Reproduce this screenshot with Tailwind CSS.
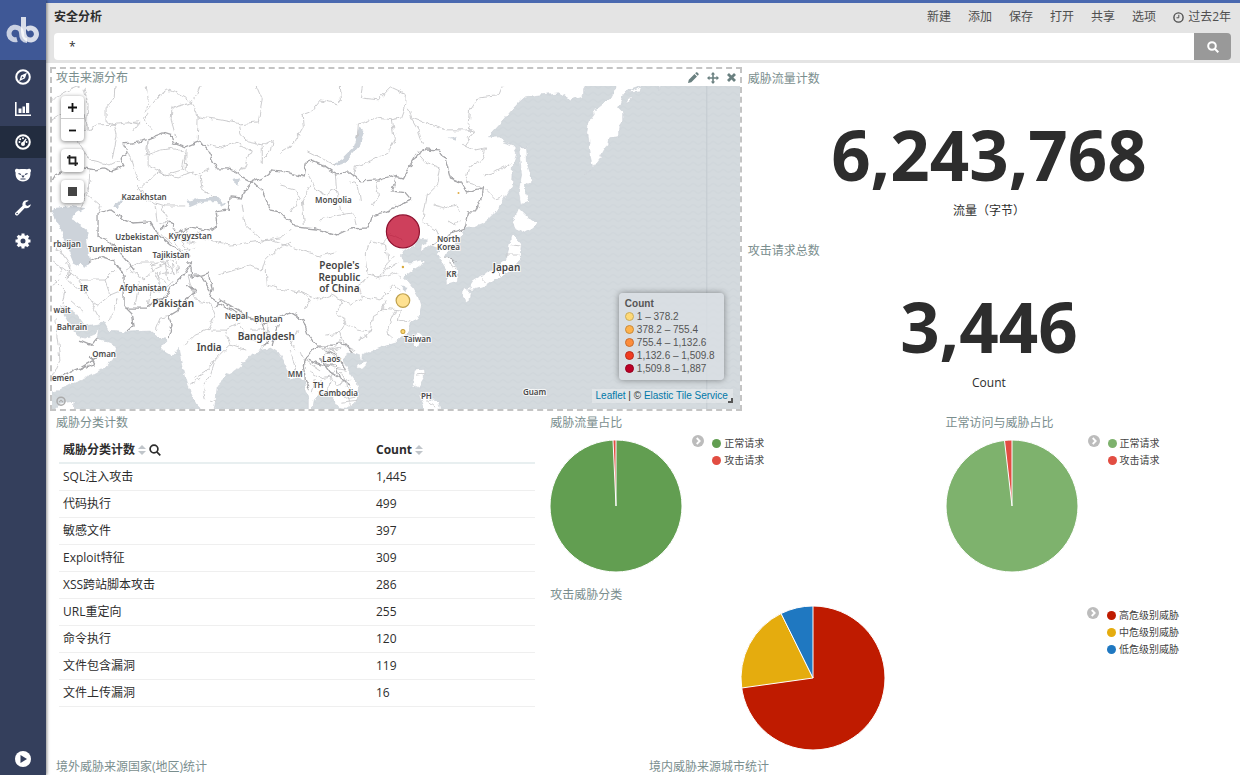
<!DOCTYPE html>
<html lang="zh-CN">

<head>
    <meta charset="UTF-8" />
    <meta name="viewport" content="width=device-width, initial-scale=1.0" />
    <title>安全分析</title>
    <script src="https://cdn.jsdelivr.net/npm/@tailwindcss/browser@4"></script>
</head>

<body class="h-screen overflow-hidden flex bg-white text-[#2d2d2d] text-xs font-['Open_Sans','Noto_Sans_CJK_SC',sans-serif]">

    <!-- Sidebar -->
    <nav class="relative z-10 w-[46px] shrink-0 h-full flex flex-col bg-[#343f5c] text-white shadow-[1px_0_3px_rgba(0,0,0,0.45)]">
        <a href="#" aria-label="首页" class="h-[60px] flex items-center justify-center bg-[#3f5896]">
            <svg class="w-[36px] h-[30px]" viewBox="0 0 36 30" fill="none">
                <path d="M12 24.500A6.300 6.300 0 1 1 16.500 17.500C16.500 22 17 25.500 22 25.500" stroke="#fff" stroke-opacity=".72" stroke-width="5" />
                <path d="M18.500 2v15c0 4.500 3 8 7.500 8a6 6 0 1 0-4.500-10.500" stroke="#fff" stroke-opacity=".8" stroke-width="5" />
            </svg>
        </a>
        <a href="#" aria-label="发现" class="h-[33px] flex items-center justify-center">
            <svg class="w-4 h-4" viewBox="0 0 16 16"><circle cx="8" cy="8" r="6.8" fill="none" stroke="#fff" stroke-width="2" /><path fill="#fff" fill-rule="evenodd" d="M11.900 3.700 10 9.300 4.200 12.300 6 6.600zM7.200 7.300l-.7 2.500 2.400-1.300z" /></svg>
        </a>
        <a href="#" aria-label="可视化" class="h-[33px] flex items-center justify-center">
            <svg class="w-4 h-4" viewBox="0 0 16 16" fill="#fff"><path d="M0 0h1.600v12.400H16V14H0zM3.500 6.500h3v4.500h-3zM7.500 4.500h2.500V11H7.500zM11 1h3.200v10H11z" /></svg>
        </a>
        <a href="#" aria-label="仪表盘" class="h-8 flex items-center justify-center bg-[#222c3f]">
            <svg class="w-4 h-4" viewBox="0 0 16 16"><circle cx="8" cy="8" r="6.8" fill="none" stroke="#fff" stroke-width="2" /><g fill="#fff"><circle cx="4.500" cy="8" r="1" /><circle cx="5.200" cy="5.200" r="1" /><circle cx="8" cy="4.200" r="1" /><circle cx="11.500" cy="8" r="1" /><circle cx="8" cy="10" r="2" /><path d="m7.300 8.800 3.300-4.300 1 .8-2.500 4.500z" /></g></svg>
        </a>
        <a href="#" aria-label="时间序列" class="h-[33px] flex items-center justify-center">
            <svg class="w-4 h-4" viewBox="0 0 16 16"><path fill="#fff" d="M0 3.500C0 1.500 2.500 1.200 4 2.300c2.500-.4 5.500-.4 8 0 1.500-1.100 4-.8 4 1.200 0 1-.3 1.500-.6 2 .4 5.500-2.400 9-7.400 9s-7.800-3.500-7.400-9C.3 5 0 4.500 0 3.500z" /><path d="M3.500 6.500 6 7.500M12.500 6.500 10 7.500M5.500 12h5" stroke="#343f5c" stroke-width="1.200" /><path fill="#343f5c" d="M6.300 8.500h3.400L8 11z" /></svg>
        </a>
        <a href="#" aria-label="开发工具" class="h-[33px] flex items-center justify-center">
            <svg class="w-4 h-4" viewBox="0 0 16 16" fill="#fff"><path fill-rule="evenodd" d="M15.800 4.300 12.600 6l-2-1.100V2.600L13.700.8c-2.300-1-4.800-.2-5.800 1.600-.6 1.200-.6 2.300-.3 3.400L.6 12.500c-.8.800-.8 1.700 0 2.500s1.700.8 2.500.1l6.700-7.100c3.200.9 6-1 6-3.700zM2.100 14.300a.8.8 0 1 1 0-1.600.8.800 0 0 1 0 1.600z" /></svg>
        </a>
        <a href="#" aria-label="管理" class="h-[33px] flex items-center justify-center">
            <svg class="w-4 h-4" viewBox="0 0 16 16"><circle cx="8" cy="8" r="4.200" fill="none" stroke="#fff" stroke-width="3.400" /><path d="M8 .5v2.500M8 13v2.500M.5 8H3M13 8h2.500M2.700 2.700l1.700 1.700M11.600 11.600l1.700 1.700M13.300 2.700l-1.700 1.700M4.400 11.600l-1.700 1.700" stroke="#fff" stroke-width="3" /></svg>
        </a>
        <button type="button" aria-label="展开" class="mt-auto h-[33px] flex items-center justify-center">
            <svg class="w-4 h-4" viewBox="0 0 16 16"><circle cx="8" cy="8" r="8" fill="#fff" /><path fill="#343f5c" d="M5.500 4v8l6.500-4z" /></svg>
        </button>
    </nav>

    <main class="flex-1 min-w-0 overflow-hidden">
        <!-- Top bar -->
        <header class="h-[63px] border-t-3 border-[#4a69b0] bg-[#e4e4e4] pl-2 pr-[9px]">
            <div class="h-[30px] pb-[2px] flex items-center justify-between text-[#4f4f4f]">
                <h1 class="font-bold text-[#2d2d2d]">安全分析</h1>
                <div class="flex items-center gap-[17px]">
                    <button type="button">新建</button>
                    <button type="button">添加</button>
                    <button type="button">保存</button>
                    <button type="button">打开</button>
                    <button type="button">共享</button>
                    <button type="button">选项</button>
                    <button type="button" class="flex items-center gap-1">
                        <svg class="w-[11px] h-[11px]" viewBox="0 0 11 11" fill="none" stroke="#4f4f4f" stroke-width="1.400"><circle cx="5.500" cy="5.500" r="4.600" /><path d="M5.800 2.800v3H3.500" stroke-width="1" /></svg>
                        过去2年
                    </button>
                </div>
            </div>
            <form class="h-[27px] flex">
                <input type="text" aria-label="搜索" value="*" class="flex-1 min-w-0 h-full rounded-l bg-white px-[15px] text-xs outline-none" />
                <button type="submit" aria-label="提交搜索" class="w-[37px] h-full rounded-r bg-[#999] flex items-center justify-center">
                    <svg class="w-3 h-3" viewBox="0 0 12 12" fill="none" stroke="#fff" stroke-width="2"><circle cx="5" cy="5" r="3.800" /><path d="m7.800 7.800 3.500 3.500" /></svg>
                </button>
            </form>
        </header>

        <!-- Dashboard grid -->
        <div class="grid grid-cols-12 auto-rows-[172px] px-1 pt-1">

            <section class="col-span-7 row-span-2 flex flex-col border-2 border-dashed border-[#c4c4c4]">
                <div class="h-[17px] shrink-0 flex items-center justify-between px-1 text-[#7a8e8e]">
                    <h2 class="leading-[18px]">攻击来源分布</h2>
                    <div class="flex items-center gap-2">
                        <button type="button" aria-label="编辑"><svg class="w-3 h-3" viewBox="0 0 12 12" fill="#6a8080"><path d="M1 11l.8-3.300L7.500 2l2.500 2.500-5.700 5.700zM8.200 1.300l.7-.7c.5-.5 1-.4 1.500 0l1 1c.5.500.5 1 0 1.500l-.7.7z" /></svg></button>
                        <button type="button" aria-label="移动"><svg class="w-3 h-3" viewBox="0 0 12 12" fill="#6a8080"><path d="M6 0l2.200 2.500H6.800v2.700h2.700V3.800L12 6 9.500 8.200V6.800H6.800v2.700h1.400L6 12 3.800 9.500h1.400V6.800H2.500v1.400L0 6l2.500-2.200v1.400h2.700V2.500H3.800z" /></svg></button>
                        <button type="button" aria-label="关闭"><svg class="w-[9px] h-[9px]" viewBox="0 0 9 9"><path d="m1 1 7 7M8 1 1 8" stroke="#6a8080" stroke-width="2.800" /></svg></button>
                    </div>
                </div>

                <div class="relative flex-1 min-h-0 overflow-hidden bg-[#d4dade]">
                    <svg class="absolute inset-0 w-full h-full" viewBox="52 86 687 323" preserveAspectRatio="xMidYMid slice">
                        <defs>
                            <pattern id="waves" width="10" height="7" patternUnits="userSpaceOnUse">
                                <path d="M0 3q2.500-3 5 0t5 0" fill="none" stroke="#cbd2d7" stroke-width="1" />
                            </pattern>
                            <filter id="rough" x="-5%" y="-5%" width="110%" height="110%">
                                <feTurbulence type="fractalNoise" baseFrequency="0.14" numOctaves="2" seed="4" />
                                <feDisplacementMap in="SourceGraphic" scale="6" xChannelSelector="R" yChannelSelector="G" />
                            </filter>
                        </defs>
                        <rect x="40" y="80" width="710" height="340" fill="url(#waves)" opacity=".6" />
                        <path d="M706 86V410" stroke="#c3cad0" stroke-width="1" />

                        <g filter="url(#rough)">
                            <!-- Land -->
                            <g fill="#fff" stroke="#c9cfd5" stroke-width=".6">
                                <path d="M40 76H590L583 88 583 96 570 100 558 93 540 95 525 97 518 103 510 112 500 124 487 138 498 137 503 142 513 145 516 153 513 163 512 185 505 197 495 212 485 222 475 226 465 228 462 234 455 242 448 250 445 257 454 262 458 270 457 281 447 284 446 270 441 262 436 255 440 250 428 246 420 252 421 246 427 240 419 239 411 247 403 252 400 256 403 262 412 262 420 260 424 263 413 270 404 277 412 286 418 297 421 307 419 315 412 322 408 331 402 337 395 343 385 346 375 350 363 355 362 361 360 355 352 352 345 357 344 363 350 373 357 383 359 393 355 403 345 409 338 408 333 400 328 394 318 392 314 400 311 420 308 420 308 400 305 390 303 380 297 377 290 380 287 370 282 360 277 352 270 348 262 350 252 353 246 360 235 370 225 377 217 385 216 400 211 420 205 420 190 392 185 375 181 358 179 348 172 356 162 350 162 345 168 340 156 336 150 331 128 332 108 330 104 323 85 326 75 312 66 306 60 308 68 320 76 335 85 338 95 334 99 328 97 338 108 342 117 346 114 357 104 368 90 376 75 382 60 390 40 395z" />
                                <path d="M619 80 610 98 595 110 588 120 586 133 589 155 592 168 600 157 603 151 607 145 608 139 618 138 618 128 622 122 622 112 618 108 622 96 627 90 638 86 650 80z" />
                                <path d="M518 147 526 147 527 165 532 180 525 185 525 195 528 202 520 205 518 190 521 175zM518 208 530 220 538 223 532 229 525 233 517 229 511 226zM512 234 521 244 519 261 512 270 498 278 484 287 473 290 467 290 474 279 484 274 493 270 506 258zM462 288 471 287 468 302 461 297z" />
                                <path d="M418 332 422 335 418 347 414 345 413 340zM357 364 365 361 367 363 362 368 356 368zM414 370 423 369 424 378 418 388 412 385zM418 393 425 398 438 401 440 410 425 410zM51 412 60 404 75 402 74 412zM656 82 658 90 661 82zM585 175 590 169 586 173zM642 86 630 90 628 92 640 91zM625 103 632 99 631 97 627 99z" />
                            </g>

                            <!-- Lakes and inland seas -->
                            <g fill="#cdd3da">
                                <path d="M55 208 70 206 85 208 76 213 72 219 80 225 89 232 86 240 88 250 90 262 84 268 73 262 66 245 58 225 53 215zM334 163 342 158 352 148 359 128 364 130 360 145 350 156 342 164 335 166zM187 201 200 198 218 198 226 205 222 207 215 201 202 202 190 207zM113 207 121 199 125 200 118 207zM448 139 456 137 455 141zM400 285 408 288 406 291zM232 180 240 178 238 185zM70 103 74 98 73 104z" />
                            </g>

                            <!-- Province borders -->
                            <g fill="none" stroke="#c6c6c8" stroke-width=".9">
                                <path d="M50 100 65 92 80 86M52 120 70 110 84 115 88 130 100 125 120 124 138 122M84 89 88 105 86 130 76 140 90 160 110 165 120 160M115 86 114 98 106 108 106 122 114 124 117 135 112 160M138 124 128 122M140 122 132 132M146 86 148 100 144 113 160 95 168 90 180 95 192 102 198 117 197 140M148 113 144 120 153 130M197 117 220 120 240 124 258 122 262 100 256 86M238 124 240 135 248 142 262 145 262 165M172 106 171 120 176 138M200 86 194 101M192 103 176 107 170 110M128 152 134 170 138 180M148 140 146 155 162 150 175 148 185 155 182 170 165 175 148 165zM186 150 185 170 195 176 208 170M207 145 220 148 235 143 250 150 245 165 240 172M90 170 88 195 100 205 98 212M90 182 80 210M138 190 158 172M158 172 178 178 193 172M138 185 146 200 165 206 185 206M200 176 202 190 215 198M162 206 168 222 160 224M155 205 157 222M262 145 272 140 270 152 262 160" />
                                <path d="M340 86 341 100 337 104 320 100 310 112 302 115 303 128 296 140 290 146 280 152M362 86 360 98 378 100 390 88 405 95 404 107 400 118 391 120 376 118 358 124 357 138M391 120 394 140 388 152 370 162 356 166 353 178M408 108 412 120 418 130 422 145M412 118 430 125 446 130 472 130M502 86 498 96 478 98 470 110 468 130 474 131 464 145 475 150 485 148 482 160 468 168 465 182 475 185 483 190M308 152 320 158 335 165M416 152 425 162 440 168 437 185 427 195 425 205M425 205 422 222 436 230 440 240M433 205 444 208 456 205 460 212M448 221 455 226 460 219M485 190 495 200 504 197M483 175 495 172 510 164M335 174 336 188 326 195 316 190 308 175M310 185 302 200 304 225M336 190 340 210 345 215M350 182 358 186 360 200M375 182 378 195 372 205M280 186 295 190 300 198 290 212M320 220 335 216 352 213 355 225" />
                                <path d="M242 205 245 225 262 240 280 238 290 228M190 235 230 245 270 240 300 250 320 256 335 252M218 275 225 273 250 265 262 270 265 260 275 250 290 242M265 270 266 285 285 290 300 292 310 300 305 310M300 292 318 300 330 295 342 300 335 312 345 322 340 333 325 335M366 252 370 240 385 245 388 262 380 278 368 275 366 260zM388 262 395 255M380 278 395 272 400 278M368 278 358 285 362 298 350 305 342 300M362 296 380 300 392 285 400 290M385 300 382 310 372 316 370 332 358 340M382 308 400 310 398 320 410 322M395 310 388 325 390 340M343 322 358 330 370 332M340 333 345 345 355 350M342 340 332 350 315 345M380 245 390 235 402 240M398 262 385 270" />
                                <path d="M60 265 80 280 105 280 115 270M105 280 110 295 98 305 90 300 78 280M55 280 65 290 62 305M110 295 122 290M118 298 110 320M90 300 100 320M70 300 84 312M55 320 60 360 52 378M80 368 92 365M60 250 70 265 68 280 80 290M130 270 145 280 155 268 168 262 175 275M140 280 135 305M152 285 148 306M160 270 158 290M165 290 172 280M150 265 158 280M125 270 140 262 155 262M170 250 178 262M180 240 190 250 178 258M170 316 160 318 155 330M188 276 195 300 210 302 215 315 208 330 195 335 185 345M210 330 225 330 240 322M225 330 230 345 215 360 205 372 195 378M215 360 210 375 203 385 205 400M200 378 190 385M230 345 245 350M240 325 250 340 262 342M268 325 265 345M250 330 262 330M210 400 216 402" />
                                <path d="M318 345 325 352 340 348M325 352 322 362 335 368 345 370M310 372 320 378 330 376 336 385M315 380 312 392M322 380 320 395M330 378 328 392M336 385 350 380M338 390 345 398 355 396M345 382 350 405M340 372 350 388M300 352 306 368M290 350 297 375M285 335 295 350M297 330 290 345M322 348 335 358M330 345 335 355M305 360 320 370M340 402 358 400M334 370 330 378M448 262 456 268M447 275 458 276M416 375 424 374M425 400 435 408M496 271 500 276M482 278 486 282M505 255 518 255M512 245 520 246" />
                                <path d="M175 232 185 238 200 232M178 240 195 243M170 236 180 250 195 248M186 228 190 240M160 234 172 244M150 265 162 262 170 268M160 274 172 272M165 262 168 280M172 260 174 276M176 262 178 274M155 272 166 284M145 290 160 292M52 262 62 268 58 275M52 285 60 280M60 240 56 250 64 256M66 262 72 272 66 278" />
                            </g>

                            <!-- National borders -->
                            <g fill="none" stroke="#a6a6a9" stroke-width="1.300">
                                <path d="M51 182 55 175 62 172M84 168 95 170 103 168 112 171 120 168 125 165 121 158 127 153 124 144 140 142 150 138 163 133 172 136 174 143 185 147 200 141 207 150 217 169 228 169 235 172 242 177 252 182 245 190 242 198 230 197 228 210 216 212 218 225 210 231 190 227 178 232 170 222 160 230" />
                                <path d="M252 182 262 178 272 170 280 171 304 177 306 163 309 160 325 167 335 174 350 173 360 181 378 180 390 176 402 179 408 168 416 155 425 149 438 150 445 160 450 178 460 182 466 192 483 188 481 198 475 212 468 212 465 228 454 232 440 240 432 246" />
                                <path d="M252 182 262 190 270 210 280 212 295 227 315 229 337 235 350 229 368 228 372 216 385 212 400 205 411 200 405 193 391 191 396 178M445 257 455 262" />
                                <path d="M98 236V213L110 209 125 220 132 223 150 222 158 235 170 245 190 258M88 262 100 257 115 262 124 275 124 306 132 314 134 325 127 331M98 236 110 242 125 258 135 270M124 308 147 308 155 300 165 298 172 285 185 273 192 262 186 262M190 262 192 278 208 273 212 288 210 297 222 305 240 315 260 320 264 325 278 318 290 312 303 320 308 335 316 345 332 345 345 343 352 352" />
                                <path d="M187 275 200 275 210 290M215 308 220 300 240 312 258 322M187 285 195 292 185 300 178 310 168 316 172 325 168 337M262 325 268 340 262 348M278 325 272 345M316 345 308 355 303 365 305 380 310 390M308 360 320 365 335 365 340 380M320 358 330 372 350 385M325 350 340 358 345 370M98 338 92 345 80 340M85 368 95 365 90 355M52 380 80 368 97 358" />
                            </g>
                        </g>

                        <!-- Place names -->
                        <g class="font-['Noto_Sans','Open_Sans',sans-serif] text-[8px] font-semibold" fill="#4a4a4a" stroke="#fff" stroke-width="2" stroke-opacity=".8" paint-order="stroke" text-anchor="middle">
                            <text x="144" y="200">Kazakhstan</text>
                            <text x="333" y="203">Mongolia</text>
                            <text x="137" y="240">Uzbekistan</text>
                            <text x="190" y="239">Kyrgyzstan</text>
                            <text x="115" y="252">Turkmenistan</text>
                            <text x="171" y="258">Tajikistan</text>
                            <text x="67" y="247">rbaijan</text>
                            <text x="84" y="291">IR</text>
                            <text x="143" y="291">Afghanistan</text>
                            <text x="62" y="313">wait</text>
                            <text x="72" y="330">Bahrain</text>
                            <text x="104" y="357">Oman</text>
                            <text x="63" y="381">emen</text>
                            <text x="236" y="319">Nepal</text>
                            <text x="268" y="322">Bhutan</text>
                            <text x="295" y="377">MM</text>
                            <text x="331" y="362">Laos</text>
                            <text x="318" y="388">TH</text>
                            <text x="338" y="396">Cambodia</text>
                            <text x="417" y="342">Taiwan</text>
                            <text x="426" y="399">PH</text>
                            <text x="451" y="277">KR</text>
                            <text x="448" y="242">North</text>
                            <text x="448" y="250">Korea</text>
                            <text x="534" y="395">Guam</text>
                        </g>
                        <g class="font-['Noto_Sans','Open_Sans',sans-serif] text-[10px] font-semibold" fill="#444" stroke="#fff" stroke-width="2" stroke-opacity=".8" paint-order="stroke" text-anchor="middle">
                            <text x="173" y="307">Pakistan</text>
                            <text x="209" y="351">India</text>
                            <text x="266" y="340">Bangladesh</text>
                            <text x="506" y="271">Japan</text>
                            <text x="339" y="269">People's</text>
                            <text x="339" y="281">Republic</text>
                            <text x="339" y="292">of China</text>
                        </g>

                        <!-- Attack sources -->
                        <circle cx="402.500" cy="231.500" r="16.500" fill="#bd0026" fill-opacity=".75" stroke="#8e1230" stroke-width="1.200" />
                        <circle cx="402.500" cy="300.500" r="6.800" fill="#fed976" fill-opacity=".8" stroke="#bfa14e" stroke-width="1.200" />
                        <circle cx="402.500" cy="331.500" r="2" fill="#fed976" stroke="#c9a03a" />
                        <circle cx="402.500" cy="267" r="1.200" fill="#d9a93a" />
                        <circle cx="458" cy="193" r="1" fill="#e0ac45" />
                        <circle cx="61" cy="401" r="4" fill="none" stroke="#aaa" stroke-width="1.500" />
                        <path d="m59 402 2-2 2 2" fill="none" stroke="#aaa" />
                    </svg>

                    <!-- Map controls -->
                    <div class="absolute left-[9px] top-[10px] flex flex-col gap-2">
                        <div class="w-[23px] rounded bg-white shadow-[0_1px_4px_rgba(0,0,0,0.5)]">
                            <button type="button" aria-label="放大" class="w-full h-[23px] flex items-center justify-center border-b border-[#ccc]"><svg class="w-[9px] h-[9px]" viewBox="0 0 9 9"><path d="M4.500 0v9M0 4.500h9" stroke="#111" stroke-width="1.800" /></svg></button>
                            <button type="button" aria-label="缩小" class="w-full h-[22px] flex items-center justify-center"><svg class="w-[9px] h-[9px]" viewBox="0 0 9 9"><path d="M1 4.500h7" stroke="#111" stroke-width="1.800" /></svg></button>
                        </div>
                        <button type="button" aria-label="裁剪" class="w-[23px] h-[23px] rounded bg-white flex items-center justify-center shadow-[0_1px_4px_rgba(0,0,0,0.5)]"><svg class="w-[11px] h-[11px]" viewBox="0 0 11 11"><path d="M2.500 0v8.500H11M0 2.500h8.500V11" fill="none" stroke="#222" stroke-width="1.800" /></svg></button>
                        <button type="button" aria-label="矩形" class="w-[23px] h-[23px] rounded bg-white flex items-center justify-center shadow-[0_1px_4px_rgba(0,0,0,0.5)]"><span class="w-[9px] h-[9px] bg-[#444]"></span></button>
                    </div>

                    <!-- Map legend -->
                    <div class="absolute right-4 bottom-[29px] w-[105px] rounded px-[6px] pt-1 pb-[5px] bg-[#dadfe3]/80 shadow-[0_0_6px_rgba(0,0,0,0.4)] text-[10px] leading-[13px] text-[#555] font-['Liberation_Sans',sans-serif]">
                        <div class="font-bold">Count</div>
                        <ul>
                            <li class="flex items-center gap-[3px] whitespace-nowrap"><i class="w-[9px] h-[9px] shrink-0 rounded-full border border-[#c9ab5d] bg-[#fed976]"></i>1 – 378.2</li>
                            <li class="flex items-center gap-[3px] whitespace-nowrap"><i class="w-[9px] h-[9px] shrink-0 rounded-full border border-[#c88a3c] bg-[#feb24c]"></i>378.2 – 755.4</li>
                            <li class="flex items-center gap-[3px] whitespace-nowrap"><i class="w-[9px] h-[9px] shrink-0 rounded-full border border-[#c86e30] bg-[#fd8d3c]"></i>755.4 – 1,132.6</li>
                            <li class="flex items-center gap-[3px] whitespace-nowrap"><i class="w-[9px] h-[9px] shrink-0 rounded-full border border-[#bb2c1c] bg-[#f03b20]"></i>1,132.6 – 1,509.8</li>
                            <li class="flex items-center gap-[3px] whitespace-nowrap"><i class="w-[9px] h-[9px] shrink-0 rounded-full border border-[#93001e] bg-[#bd0026]"></i>1,509.8 – 1,887</li>
                        </ul>
                    </div>
                    <div class="absolute right-[7px] bottom-[6px] h-[14px] pl-1 bg-white/30 flex items-center whitespace-pre text-[10px] text-[#333] font-['Liberation_Sans',sans-serif]"><a href="#" class="text-[#0078a8]">Leaflet</a> | © <a href="#" class="text-[#0078a8]">Elastic Tile Service</a><span class="self-end w-[5px] h-[5px] border-r-2 border-b-2 border-[#555]"></span></div>
                </div>
            </section>

            <!-- Metrics -->
            <section class="col-span-5 flex flex-col border-2 border-transparent">
                <h2 class="h-[18px] px-1 text-[#7a8e8e] leading-[19px]">威胁流量计数</h2>
                <div class="flex-1 flex flex-col items-center justify-center">
                    <div class="text-[69px] leading-[98px] font-bold">6,243,768</div>
                    <div class="leading-4">流量（字节）</div>
                </div>
            </section>
            <section class="col-span-5 flex flex-col border-2 border-transparent">
                <h2 class="h-[18px] px-1 text-[#7a8e8e] leading-[19px]">攻击请求总数</h2>
                <div class="flex-1 flex flex-col items-center justify-center">
                    <div class="text-[69px] leading-[98px] font-bold">3,446</div>
                    <div class="leading-4">Count</div>
                </div>
            </section>

            <!-- Threat category table -->
            <section class="col-span-5 row-span-2 border-2 border-transparent">
                <h2 class="h-[18px] px-1 text-[#7a8e8e] leading-[19px]">威胁分类计数</h2>
                <div class="px-[7px] pt-1">
                    <table class="w-full table-fixed text-left leading-4">
                        <colgroup>
                            <col class="w-[313px]" />
                            <col />
                        </colgroup>
                        <thead>
                            <tr class="border-b-2 border-[#e8eff0]">
                                <th class="px-1 pt-[7px] pb-1 font-bold">
                                    <span class="flex items-center gap-[3px]">威胁分类计数
                                        <svg class="w-2 h-[10px]" viewBox="0 0 8 10" fill="#c0c5ca"><path d="M4 0l4 4H0zM4 10l4-4H0z" /></svg>
                                        <svg class="w-3 h-3" viewBox="0 0 12 12" fill="none" stroke="#2d2d2d" stroke-width="1.700"><circle cx="5" cy="5" r="3.900" /><path d="m7.800 7.800 3.500 3.500" /></svg>
                                    </span>
                                </th>
                                <th class="px-1 pt-[7px] pb-1 font-bold">
                                    <span class="flex items-center gap-[3px]">Count
                                        <svg class="w-2 h-[10px]" viewBox="0 0 8 10" fill="#c0c5ca"><path d="M4 0l4 4H0zM4 10l4-4H0z" /></svg>
                                    </span>
                                </th>
                            </tr>
                        </thead>
                        <tbody>
                            <tr class="border-b border-[#efefef]"><td class="px-1 py-[5px]">SQL注入攻击</td><td class="px-1">1,445</td></tr>
                            <tr class="border-b border-[#efefef]"><td class="px-1 py-[5px]">代码执行</td><td class="px-1">499</td></tr>
                            <tr class="border-b border-[#efefef]"><td class="px-1 py-[5px]">敏感文件</td><td class="px-1">397</td></tr>
                            <tr class="border-b border-[#efefef]"><td class="px-1 py-[5px]">Exploit特征</td><td class="px-1">309</td></tr>
                            <tr class="border-b border-[#efefef]"><td class="px-1 py-[5px]">XSS跨站脚本攻击</td><td class="px-1">286</td></tr>
                            <tr class="border-b border-[#efefef]"><td class="px-1 py-[5px]">URL重定向</td><td class="px-1">255</td></tr>
                            <tr class="border-b border-[#efefef]"><td class="px-1 py-[5px]">命令执行</td><td class="px-1">120</td></tr>
                            <tr class="border-b border-[#efefef]"><td class="px-1 py-[5px]">文件包含漏洞</td><td class="px-1">119</td></tr>
                            <tr class="border-b border-[#efefef]"><td class="px-1 py-[5px]">文件上传漏洞</td><td class="px-1">16</td></tr>
                        </tbody>
                    </table>
                </div>
            </section>

            <!-- Pies -->
            <section class="col-span-4 border-2 border-transparent">
                <h2 class="h-[18px] px-1 text-[#7a8e8e] leading-[19px]">威胁流量占比</h2>
                <div class="flex px-1">
                    <div class="h-[150px] flex items-center">
                        <svg class="w-[132px] h-[132px]" viewBox="-66 -66 132 132" stroke="#fff" stroke-width="1">
                            <circle r="66" fill="#629e51" />
                            <path d="M0 0-3-65.900A66 66 0 0 1 0-66z" fill="#e24d42" />
                        </svg>
                    </div>
                    <div class="flex gap-2 pt-1 pl-[10px] text-[10px] leading-[17px] text-[#444]">
                        <button type="button" aria-label="切换图例" class="h-3"><svg class="w-3 h-3" viewBox="0 0 12 12"><circle cx="6" cy="6" r="6" fill="#bcbcbc" /><path d="M4.700 3l3 3-3 3" fill="none" stroke="#fff" stroke-width="1.800" /></svg></button>
                        <ul>
                            <li class="flex items-center gap-[3px]"><i class="w-[9px] h-[9px] rounded-full bg-[#629e51]"></i>正常请求</li>
                            <li class="flex items-center gap-[3px]"><i class="w-[9px] h-[9px] rounded-full bg-[#e24d42]"></i>攻击请求</li>
                        </ul>
                    </div>
                </div>
            </section>
            <section class="col-span-3 border-2 border-transparent">
                <h2 class="h-[18px] px-1 text-[#7a8e8e] leading-[19px]">正常访问与威胁占比</h2>
                <div class="flex px-1">
                    <div class="h-[150px] flex items-center">
                        <svg class="w-[132px] h-[132px]" viewBox="-66 -66 132 132" stroke="#fff" stroke-width="1">
                            <circle r="66" fill="#7eb26d" />
                            <path d="M0 0-7.500-65.600A66 66 0 0 1 0-66z" fill="#e24d42" />
                        </svg>
                    </div>
                    <div class="flex gap-2 pt-1 pl-[10px] text-[10px] leading-[17px] text-[#444]">
                        <button type="button" aria-label="切换图例" class="h-3"><svg class="w-3 h-3" viewBox="0 0 12 12"><circle cx="6" cy="6" r="6" fill="#bcbcbc" /><path d="M4.700 3l3 3-3 3" fill="none" stroke="#fff" stroke-width="1.800" /></svg></button>
                        <ul>
                            <li class="flex items-center gap-[3px]"><i class="w-[9px] h-[9px] rounded-full bg-[#7eb26d]"></i>正常请求</li>
                            <li class="flex items-center gap-[3px]"><i class="w-[9px] h-[9px] rounded-full bg-[#e24d42]"></i>攻击请求</li>
                        </ul>
                    </div>
                </div>
            </section>
            <section class="col-span-7 border-2 border-transparent">
                <h2 class="h-[18px] px-1 text-[#7a8e8e] leading-[19px]">攻击威胁分类</h2>
                <div class="flex px-1">
                    <div class="flex-1 h-[150px] flex items-center justify-center">
                        <svg class="w-[144px] h-[144px]" viewBox="-72 -72 144 144" stroke="#fff" stroke-width="1">
                            <circle r="72" fill="#bf1b00" />
                            <path d="M0 0-71.300 10A72 72 0 0 1-31.900-64.500z" fill="#e5ac0e" />
                            <path d="M0 0-31.900-64.500A72 72 0 0 1 0-72z" fill="#1f78c1" />
                        </svg>
                    </div>
                    <div class="w-[154px] flex gap-2 pt-1 pl-[11px] text-[10px] leading-[17px] text-[#444]">
                        <button type="button" aria-label="切换图例" class="h-3"><svg class="w-3 h-3" viewBox="0 0 12 12"><circle cx="6" cy="6" r="6" fill="#bcbcbc" /><path d="M4.700 3l3 3-3 3" fill="none" stroke="#fff" stroke-width="1.800" /></svg></button>
                        <ul>
                            <li class="flex items-center gap-[3px]"><i class="w-[9px] h-[9px] rounded-full bg-[#bf1b00]"></i>高危级别威胁</li>
                            <li class="flex items-center gap-[3px]"><i class="w-[9px] h-[9px] rounded-full bg-[#e5ac0e]"></i>中危级别威胁</li>
                            <li class="flex items-center gap-[3px]"><i class="w-[9px] h-[9px] rounded-full bg-[#1f78c1]"></i>低危级别威胁</li>
                        </ul>
                    </div>
                </div>
            </section>

            <section class="col-span-6 border-2 border-transparent">
                <h2 class="h-[18px] px-1 text-[#7a8e8e] leading-[19px]">境外威胁来源国家(地区)统计</h2>
            </section>
            <section class="col-span-6 border-2 border-transparent">
                <h2 class="h-[18px] px-1 text-[#7a8e8e] leading-[19px]">境内威胁来源城市统计</h2>
            </section>
        </div>
    </main>
</body>

</html>
